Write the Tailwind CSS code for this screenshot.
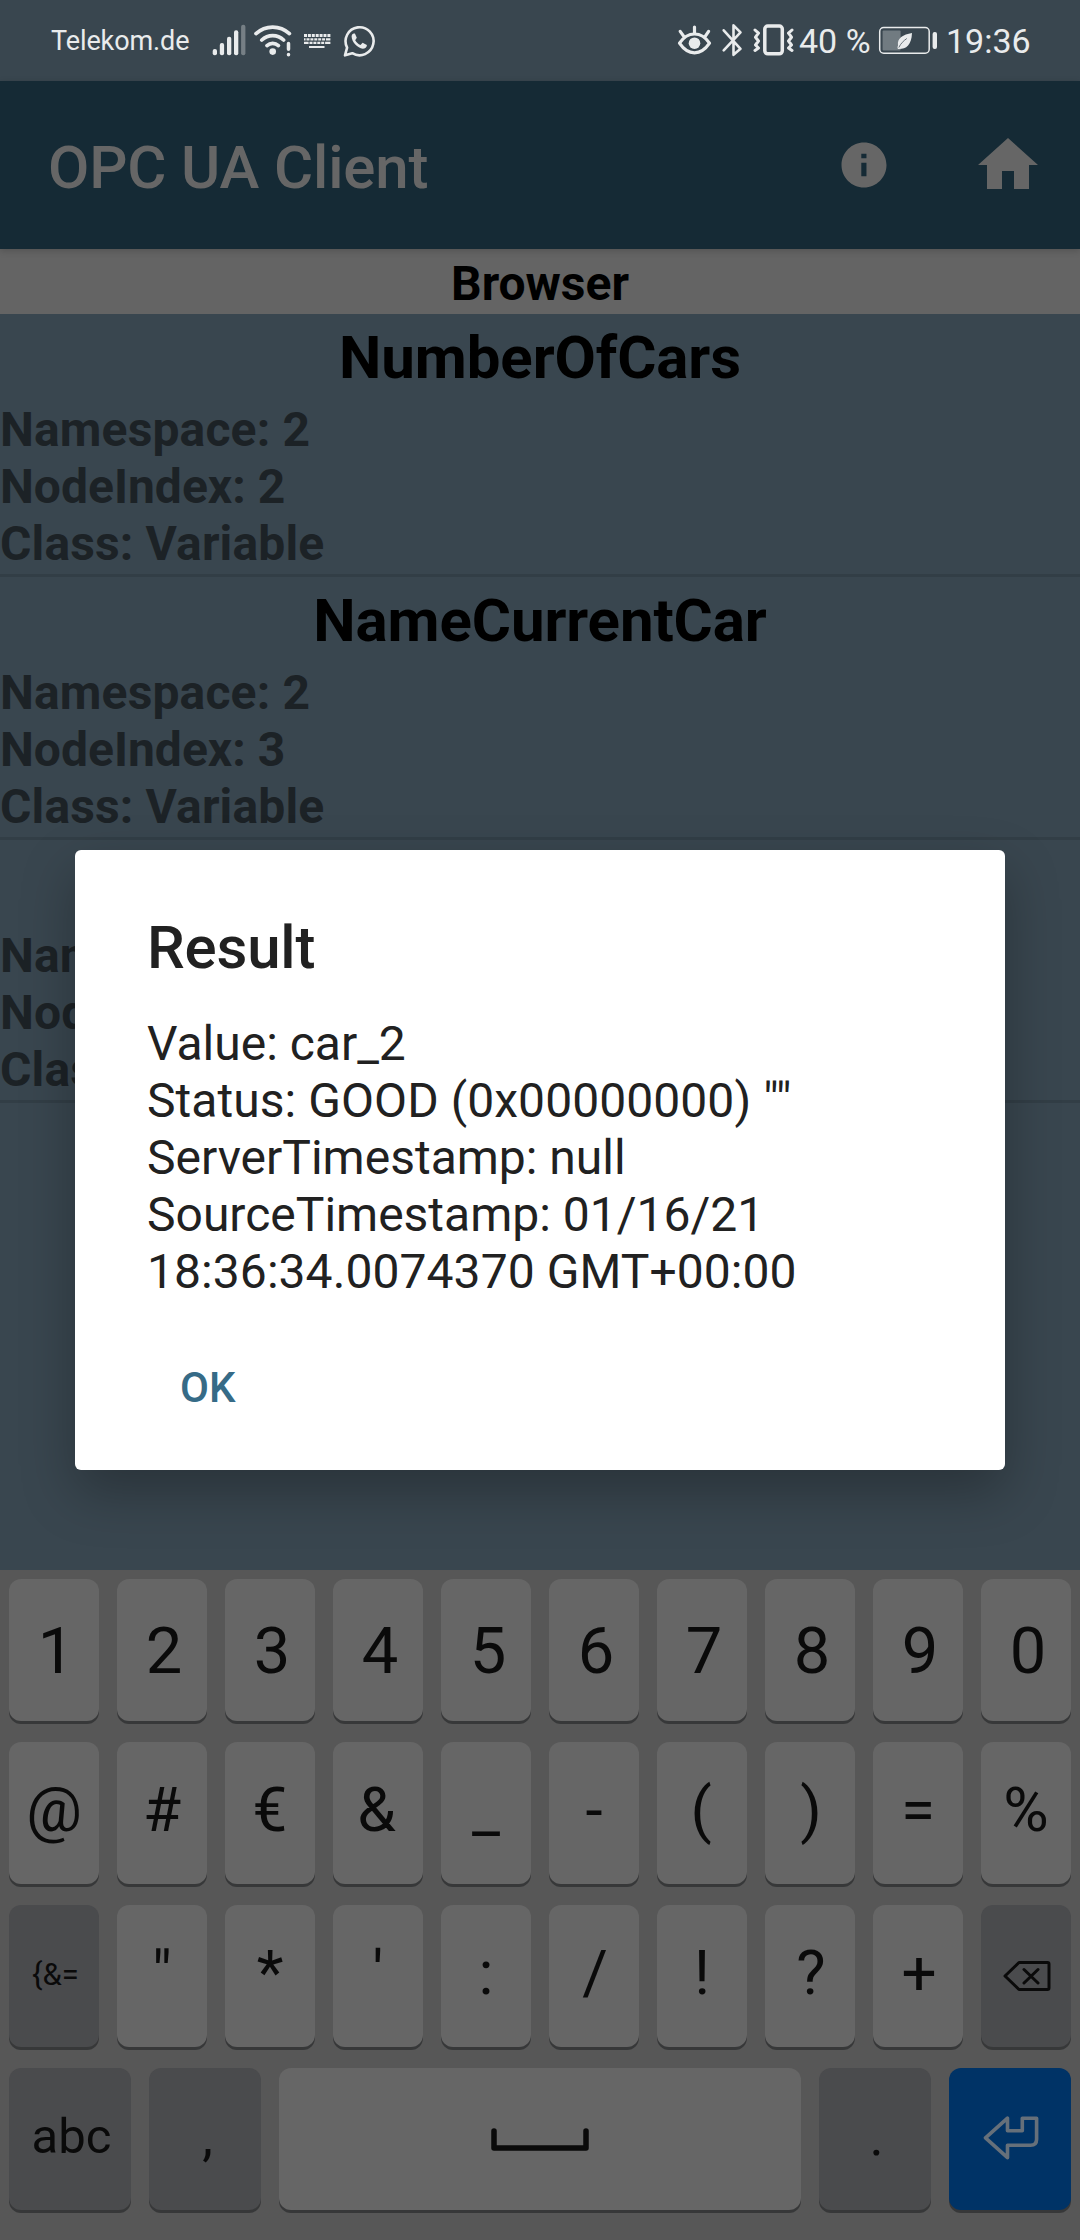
<!DOCTYPE html>
<html lang="en">
<head>
<meta charset="utf-8">
<title>OPC UA Client</title>
<script src="https://cdn.jsdelivr.net/npm/@tailwindcss/browser@4"></script>
</head>
<body class="bg-[#39464f]">
<div class="relative flex h-[2240px] w-[1080px] flex-col overflow-hidden bg-[#39464f] font-['Roboto',sans-serif]">

  <!-- Status bar -->
  <header class="flex h-[81px] items-center justify-between pl-[51px] pr-[50px] text-[#e9ebec]">
    <div class="flex items-center">
      <span class="w-[161px] pt-[2px] text-[27px] leading-none tracking-[-0.1px]">Telekom.de</span>
      <svg class="h-[40px] w-[40px]" viewBox="212 21 40 40" fill="currentColor">
        <rect x="212.7" y="49" width="4.3" height="6.3" rx="2"/><rect x="219.8" y="43" width="4.3" height="12.3" rx="2"/><rect x="227" y="36.7" width="4.3" height="18.6" rx="2"/><rect x="234" y="30.3" width="4.3" height="25" rx="2"/><rect x="241.1" y="24.7" width="4.3" height="30.6" rx="2" opacity=".35"/>
      </svg>
      <svg class="h-[40px] w-[46px]" viewBox="252 21 46 40" fill="none" stroke="currentColor" stroke-width="3.7" stroke-linecap="round">
        <path d="M256 33.6a24.5 24.5 0 0 1 33.4 0M261.8 40a16 16 0 0 1 21.8 0M267 45.6a8.6 8.6 0 0 1 11.4 0"/>
        <circle cx="272.7" cy="51.6" r="3.3" fill="currentColor" stroke="none"/>
        <path d="M288.5 43.6v5.6M288.5 54.6v.1" stroke-width="3.5"/>
      </svg>
      <svg class="h-[40px] w-[42px]" viewBox="298 21 42 40" stroke="currentColor" fill="none">
        <path d="M304 35.6h26.4" stroke-width="3" stroke-dasharray="3 .9"/>
        <path d="M304 39.4h26.4" stroke-width="2.4" stroke-dasharray="1.6 .9 3 .9 3 .9 3 .9 3 .9 3 .9 5"/>
        <path d="M304 42.9h26.4" stroke-width="2.4" stroke-dasharray="4.6 .9 3 .9 3 .9 3 .9 3 .9 6"/>
        <path d="M309 47h15.5" stroke-width="2"/>
      </svg>
      <svg class="h-[40px] w-[40px]" viewBox="340 21 40 40" fill="none" stroke="currentColor">
        <path d="M345 55.3l2.1-7.7a14 14 0 1 1 5.2 5.6z" stroke-width="2.6" stroke-linejoin="round"/>
        <path d="M351.6 36.6c0-1.8 1.3-3.1 2.3-3.1h1l1.9 4.2-1.6 2.5c1.2 2.2 3 3.8 5.3 4.8l2.1-2.2 4.3 2.1c.1 2.4-1.9 3.8-4.2 3.8-5-.3-11-6.5-11.1-12.1z" fill="currentColor" stroke="none"/>
      </svg>
    </div>
    <div class="flex items-center">
      <svg class="h-[40px] w-[42px]" viewBox="676 21 42 40" fill="none" stroke="currentColor" stroke-width="3.2" stroke-linecap="round">
        <path d="M679.5 43.2c4-6 9-9.200 15-9.200s11 3.200 15 9.200c-4 6-9 9.600-15 9.600s-11-3.600-15-9.600z" stroke-linejoin="round"/>
        <circle cx="694.5" cy="43.2" r="5.8" fill="currentColor" stroke="none"/>
        <path d="M694.5 27v6M680.2 31.4l3.6 5M708.6 31.4l-3.4 5"/>
      </svg>
      <svg class="h-[40px] w-[32px]" viewBox="718 21 32 40" fill="none" stroke="currentColor" stroke-width="2.6" stroke-linecap="round" stroke-linejoin="round">
        <path d="M723.7 30.3l16.800 18.500-7 6V25.400l7 7-16.800 17.900"/>
      </svg>
      <svg class="h-[40px] w-[49px]" viewBox="750 21 49 40" fill="none" stroke="currentColor" stroke-width="3.5" stroke-linecap="round" stroke-linejoin="round">
        <rect x="764.8" y="26" width="17.5" height="27.8" rx="3"/>
        <path d="M755 30l3.5 3.2-3 4 3 3.8-3 4 3 3-3.500 2.500M792 30l-3.500 3.200 3 4-3 3.800 3 4-3 3 3.500 2.500" stroke-width="3"/>
      </svg>
      <span class="w-[78px] whitespace-nowrap text-[34px] leading-none">40 %</span>
      <svg class="h-[40px] w-[69px]" viewBox="877 21 69 40" fill="none" stroke="currentColor">
        <rect x="879.7" y="27.5" width="49.5" height="25.7" rx="4" stroke-width="1.5"/>
        <rect x="882.6" y="30.5" width="18" height="20" rx="1" fill="currentColor" stroke="none" opacity=".32"/>
        <path d="M912 33c-9 1.500-15 5-14 12.500-.6 1.200-.7 2.500 0 3.500 8 .3 13.500-3.500 14-16z" fill="currentColor" stroke="none"/>
        <path d="M898.8 47.500c2-4 4.500-6.500 8-9" stroke="#68727a" stroke-width="1"/>
        <rect x="932.6" y="32" width="4.4" height="17" rx="2" fill="currentColor" stroke="none"/>
      </svg>
      <span class="w-[84px] text-[34px] leading-none">19:36</span>
    </div>
  </header>

  <!-- App bar -->
  <div class="relative z-10 flex h-[168px] shrink-0 items-center bg-[#152a35] pl-[48px] pr-[36px] text-[#666666] shadow-[0_2px_7px_rgba(0,0,0,0.18)]">
    <h1 class="grow pt-[5px] text-[60px] font-medium leading-none tracking-[-0.15px]">OPC UA Client</h1>
    <svg class="mr-[81px] h-[54px] w-[54px]" viewBox="0 0 24 24" fill="currentColor"><path d="M12 2C6.480 2 2 6.480 2 12s4.480 10 10 10 10-4.480 10-10S17.520 2 12 2zm1.100 15h-2.300v-6h2.300v6zm0-8h-2.300V7h2.300v2z"/></svg>
    <svg class="h-[72px] w-[72px]" viewBox="0 0 24 24" fill="currentColor"><path d="M10 20v-6h4v6h5v-8h3L12 3 2 12h3v8z"/></svg>
  </div>

  <div class="h-[65px] shrink-0 bg-[#646464] pt-[2px] text-center text-[48px] font-bold leading-[65px] text-black">Browser</div>

  <!-- Node list -->
  <ul class="grow text-[48px] font-bold leading-[57px] tracking-[0.15px] text-[#1c2226]">
    <li class="h-[263px] border-b-3 border-[#323e46]">
      <h2 class="text-center text-[60px] leading-[87px] tracking-[-0.1px] text-black">NumberOfCars</h2>
      <p>Namespace: 2</p><p class="tracking-normal">NodeIndex: 2</p><p>Class: Variable</p>
    </li>
    <li class="h-[263px] border-b-3 border-[#323e46]">
      <h2 class="text-center text-[60px] leading-[87px] tracking-[-0.1px] text-black">NameCurrentCar</h2>
      <p>Namespace: 2</p><p class="tracking-normal">NodeIndex: 3</p><p>Class: Variable</p>
    </li>
    <li class="h-[263px] border-b-3 border-[#323e46] pt-[87px]">
      <p>Namespace: 2</p><p>NodeIndex: 4</p><p>Class: Variable</p>
    </li>
  </ul>

  <!-- Keyboard -->
  <div class="relative z-20 flex h-[670px] shrink-0 flex-col gap-[21px] bg-[#575757] px-[9px] pt-[9px] text-[62px] leading-none text-[#0a0a0a]">
    <div class="grid h-[142px] grid-cols-10 gap-[18px] text-[65px] *:flex *:items-center *:justify-center *:rounded-[12px] *:bg-[#666666] *:pt-[2px] *:pl-[4px] *:shadow-[0_3px_0_#373839]">
      <div>1</div><div>2</div><div>3</div><div>4</div><div>5</div><div>6</div><div>7</div><div>8</div><div>9</div><div>0</div>
    </div>
    <div class="grid h-[142px] grid-cols-10 gap-[18px] *:flex *:items-center *:justify-center *:rounded-[12px] *:bg-[#666666] *:pb-[6px] *:shadow-[0_3px_0_#373839]">
      <div>@</div><div>#</div><div>€</div><div class="pr-[3px]">&amp;</div><div>_</div><div>-</div><div class="pr-[2px]">(</div><div class="pl-[2px]">)</div><div>=</div><div>%</div>
    </div>
    <div class="grid h-[142px] grid-cols-10 gap-[18px] *:flex *:items-center *:justify-center *:rounded-[12px] *:shadow-[0_3px_0_#373839]">
      <div class="bg-[#4a4b4d] pb-[3px] pl-[3px] text-[31px]">{&amp;=</div>
      <div class="bg-[#666666] pb-[6px]">"</div><div class="bg-[#666666] pb-[6px]">*</div><div class="bg-[#666666] pb-[6px]">'</div><div class="bg-[#666666] pb-[6px]">:</div><div class="bg-[#666666] pb-[6px] pl-[2px]">/</div><div class="bg-[#666666] pb-[6px]">!</div><div class="bg-[#666666] pb-[6px] pl-[2px]">?</div><div class="bg-[#666666] pb-[6px] pl-[2px]">+</div>
      <div class="bg-[#4a4b4d]">
        <svg class="ml-[2px] mb-[1px] h-[32px] w-[48px]" viewBox="0 0 48 32" fill="none" stroke="currentColor" stroke-width="3" stroke-linejoin="round" stroke-linecap="round"><path d="M16 2.500h28.500q1.500 0 1.500 1.500v24q0 1.500-1.500 1.500H16L2 16zM21 9.500l14 13.500M35 9.500l-14 13.500"/></svg>
      </div>
    </div>
    <div class="flex h-[142px] gap-[18px] *:flex *:items-center *:justify-center *:rounded-[12px] *:shadow-[0_3px_0_#373839]">
      <div class="w-[122px] bg-[#4a4b4d] pb-[5px] pl-[3px] text-[49px]">abc</div>
      <div class="w-[112px] bg-[#4a4b4d] pb-[5px] pl-[5px] text-[54px]">,</div>
      <div class="grow bg-[#666666]">
        <svg class="h-[24px] w-[100px]" viewBox="0 0 100 24" fill="none" stroke="currentColor" stroke-width="5.5" stroke-linecap="round" stroke-linejoin="round"><path d="M4 4v17h92V4"/></svg>
      </div>
      <div class="w-[112px] bg-[#4a4b4d] pb-[5px] pl-[3px] text-[54px]">.</div>
      <div class="w-[122px] bg-[#003366]">
        <svg class="ml-[2px] mb-[2px] h-[48px] w-[58px]" viewBox="982 2114 58 48" fill="none" stroke="#66707a" stroke-width="3.6" stroke-linejoin="round"><path d="M985.500 2137.800l22-19.600v12.500h14.800v-12.500h14.300v21q0 6-6 6h-23.100v12.500z"/></svg>
      </div>
    </div>
  </div>

  <!-- Result dialog -->
  <div role="dialog" class="absolute left-[75px] top-[850px] z-10 flex h-[620px] w-[930px] flex-col rounded-[6px] bg-white px-[72px] pt-[63px] text-[#212121] shadow-[0_22px_54px_rgba(0,0,0,0.28)]">
    <h2 class="text-[60px] font-medium leading-[70px] tracking-[-0.2px]">Result</h2>
    <p class="mt-[32px] text-[48px] leading-[57px]">Value: car_2<br><span class="tracking-[0.06px]">Status: GOOD (0x00000000) ""</span><br>ServerTimestamp: null<br>SourceTimestamp: 01/16/21<br><span class="tracking-[0.07px]">18:36:34.0074370 GMT+00:00</span></p>
    <button class="mt-[63px] ml-[33px] self-start text-[42px] font-medium leading-[50px] text-[#366b87]">OK</button>
  </div>
</div>
</body>
</html>
